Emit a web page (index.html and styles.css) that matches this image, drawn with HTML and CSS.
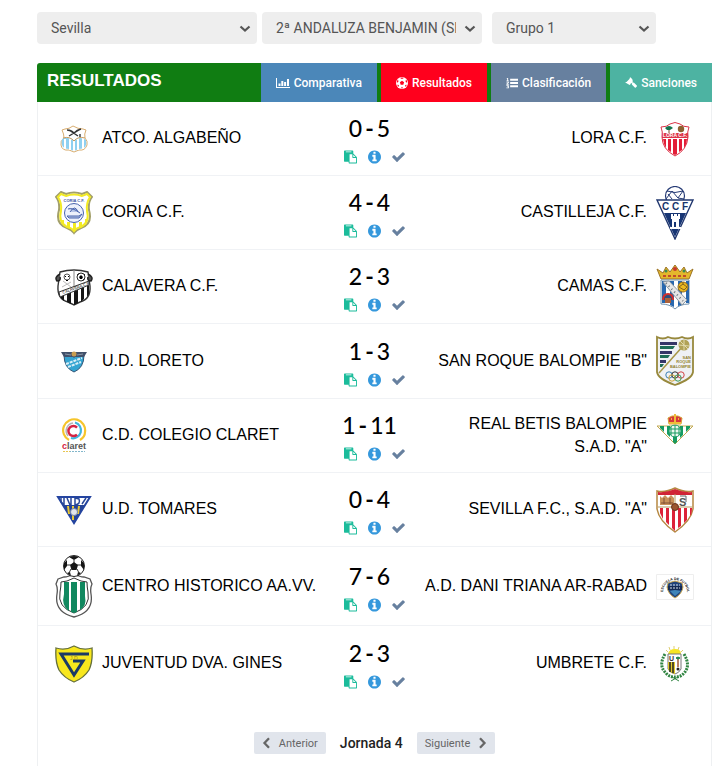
FILE: index.html
```html
<!DOCTYPE html>
<html lang="es">
<head>
<meta charset="utf-8">
<meta name="viewport" content="width=device-width, initial-scale=1">
<title>Resultados</title>
<link rel="stylesheet" href="styles.css">
</head>
<body>
<svg class="sprite" aria-hidden="true">
  <symbol id="i-paste" viewBox="0 0 1792 1792"><path d="M768 1664h896v-640h-416q-40 0-68-28t-28-68v-416h-384v1152zm256-1440v-64q0-13-9.500-22.500t-22.500-9.500h-704q-13 0-22.500 9.500t-9.500 22.500v64q0 13 9.500 22.500t22.500 9.500h704q13 0 22.500-9.500t9.500-22.500zm256 672h299l-299-299v299zm512 128v672q0 40-28 68t-68 28h-960q-40 0-68-28t-28-68v-160h-544q-40 0-68-28t-28-68v-1344q0-40 28-68t68-28h1088q40 0 68 28t28 68v328q21 13 36 28l408 408q28 28 48 76t20 88z"/></symbol>
  <symbol id="i-info" viewBox="128 128 1536 1536"><path d="M1152 1376v-160q0-14-9-23t-23-9h-96v-512q0-14-9-23t-23-9h-320q-14 0-23 9t-9 23v160q0 14 9 23t23 9h96v320h-96q-14 0-23 9t-9 23v160q0 14 9 23t23 9h448q14 0 23-9t9-23zm-128-896v-160q0-14-9-23t-23-9h-192q-14 0-23 9t-9 23v160q0 14 9 23t23 9h192q14 0 23-9t9-23zm640 416q0 209-103 385.500t-279.500 279.500-385.500 103-385.500-103-279.500-279.500-103-385.500 103-385.500 279.500-279.500 385.500-103 385.500 103 279.500 279.500 103 385.500z"/></symbol>
  <symbol id="i-check" viewBox="100 128 1592 1592"><path d="M1671 566q0 40-28 68l-724 724-136 136q-28 28-68 28t-68-28l-136-136-362-362q-28-28-28-68t28-68l136-136q28-28 68-28t68 28l294 295 656-657q28-28 68-28t68 28l136 136q28 28 28 68z"/></symbol>
  <symbol id="i-down" viewBox="0 0 12 8"><path d="M1.500 1.500 6 5.600l4.500-4.100" fill="none" stroke="currentColor" stroke-width="2.200"/></symbol>
  <symbol id="i-left" viewBox="0 0 8 12"><path d="M6.500 1.300 2 6l4.500 4.700" fill="none" stroke="currentColor" stroke-width="2.300"/></symbol>
  <symbol id="i-right" viewBox="0 0 8 12"><path d="M1.500 1.300 6 6l-4.500 4.700" fill="none" stroke="currentColor" stroke-width="2.300"/></symbol>
  <symbol id="i-bars" viewBox="0 0 14 12"><path d="M0 1h1v9h13v1H0zM2.500 6.500h2V9h-2zM5.300 4h2v5h-2zM8.100 5h2v4h-2zM11 2h2v7h-2z"/></symbol>
  <symbol id="i-ball" viewBox="0 0 12 12"><circle cx="6" cy="6" r="6"/><path d="m6 3.800 2.100 1.500-.8 2.500H4.700l-.8-2.500zM4.100.9 6 2l1.900-1.100L6 .5zM.9 5.900l1.600-1.300L2 2.600 1 4zM11.100 5.900 9.500 4.600l.5-2L11 4zM2.600 10l.3-2.100-1.700-.2.600 1.400zM9.400 10l-.3-2.100 1.700-.2-.6 1.400zM4.900 11.300 6 9.700l1.100 1.600z" fill="#ff001d"/></symbol>
  <symbol id="i-list" viewBox="0 0 13 12"><path d="M4.500 1.500H13v2H4.500zM4.500 5H13v2H4.500zM4.500 8.500H13v2H4.500zM1.200.5h1.100v2.800h.8V4H.5v-.7h.8V1.500H.5zM.5 4.600h2.600v1.500L1.700 7h1.400v.8H.4V6.700l1.600-1V5.400H.5zM.4 8.500h2.700v3.200H.4V11h1.700v-.6H1v-.7h1.100v-.5H.4z"/></symbol>
  <symbol id="i-gavel" viewBox="0 0 12 12"><path d="M5.400.3 7.600 2.500l-.5.500 1 1-.9 1 1 .8.600-.4 3 3q.5.500 0 1l-1 1q-.5.500-1 0l-3-3 .4-.6-.9-.9-1 1-.1.800-.5.400L.3 5.400l.5-.5.700.1 3.200-3.200-.1-.8z"/></symbol>
</svg>

<main class="page">
  <form class="filters">
    <div class="filter filter-wide">
      <select aria-label="Provincia"><option>Sevilla</option></select>
      <svg class="caret"><use href="#i-down"/></svg>
    </div>
    <div class="filter filter-wide">
      <select aria-label="Competición"><option>2ª ANDALUZA BENJAMIN (SEVILLA)</option></select>
      <svg class="caret"><use href="#i-down"/></svg>
    </div>
    <div class="filter filter-group">
      <select aria-label="Grupo"><option>Grupo 1</option></select>
      <svg class="caret"><use href="#i-down"/></svg>
    </div>
  </form>

  <section class="panel">
    <header class="panel-head">
      <h1>RESULTADOS</h1>
      <nav class="tabs">
        <a class="tab tab-blue" href="#"><svg class="tab-icon tab-icon-wide"><use href="#i-bars"/></svg>Comparativa</a>
        <a class="tab tab-red" href="#"><svg class="tab-icon"><use href="#i-ball"/></svg>Resultados</a>
        <a class="tab tab-slate" href="#"><svg class="tab-icon"><use href="#i-list"/></svg>Clasificación</a>
        <a class="tab tab-teal" href="#"><svg class="tab-icon"><use href="#i-gavel"/></svg>Sanciones</a>
      </nav>
    </header>

    <ul class="matches">
      <li class="match">
        <div class="team">
          <svg class="crest" viewBox="0 0 38 28" height="28">
            <path d="M10 4q4 0 8-3 5 3 10 3l3 1q-2 4-1 8 3 3 2 7-2 6-8 5l-5 2-5-2q-7 1-8-5-1-4 3-7 0-4-2-8z" fill="#fff" stroke="#d9ae71"/>
            <path d="M7 14q3-2 6-1 3 1 6 3 3-2 6-3 4 0 6 2 2 9-7 9l-5 2-5-2q-9 0-7-10z" fill="#8fd0f0"/>
            <path d="M10 14v10M15 14v11M19 16v10M23 14v11M28 13v11" stroke="#fff" stroke-width="2"/>
            <path d="M12 5q4 0 7 3 3-3 7-4M14 11l10-6M23 11l-9-6M25 9v3" fill="none" stroke="#333" stroke-width="1.400"/>
            <path d="M8 13q7-2 11 3 4-5 11-3" stroke="#c79a5c" fill="none"/>
          </svg>
          <span class="name">ATCO. ALGABEÑO</span>
        </div>
        <div class="center"><strong class="score"><span>0</span><b>-</b><span>5</span></strong><div class="actions"><a class="paste" href="#" aria-label="Acta"><svg><use href="#i-paste"/></svg></a><a class="info" href="#" aria-label="Información"><svg><use href="#i-info"/></svg></a><a class="check" href="#" aria-label="Confirmado"><svg><use href="#i-check"/></svg></a></div></div>
        <div class="team team-away">
          <svg class="crest" viewBox="0 0 38 36" height="36">
            <path d="M5 6q6 0 9-3 5-3 10 0 3 3 9 3-2 5-1 10-1 13-13 19Q6 28 6 16 7 11 5 6z" fill="#fff" stroke="#dc3448"/>
            <path d="M7 18h3v9l-2-4zM12 18h3v13l-3-2zM17 18h4v15l-2 1-2-1zM23 18h3v11l-3 2zM28 18h3q0 5-3 9z" fill="#e31e38"/>
            <path d="M6 12h26v5H6z" fill="#dc3448"/>
            <path d="M13 7v5" stroke="#754b26"/><path d="M9 7q4-4 8 0l-3 2h-3z" fill="#16724e"/><circle cx="25" cy="8" r="3.200" fill="#8c6130"/>
            <text x="19" y="16" font-size="5" font-weight="bold" fill="#fff" text-anchor="middle">LORA C.F.</text>
          </svg>
          <span class="name">LORA C.F.</span>
        </div>
      </li>

      <li class="match">
        <div class="team">
          <svg class="crest" viewBox="0 0 38 44" height="44">
            <path d="m6 1 5 2q8-3 16 0l5-2 5 5q-4 5-3 13 4 14-8 18-5 2-7 5-2-3-7-5Q0 33 4 19 5 11 1 6z" fill="#fff" stroke="#a3a06a" stroke-width="2"/>
            <path d="m6 3 5 2q8-3 16 0l5-2 3 3q-4 6-3 14 3 11-6 16-5 1-7 4-2-3-7-4Q3 31 6 20 7 12 3 6z" fill="none" stroke="#f2ea24" stroke-width="2"/>
            <path d="M6 29h3v6l-3-3zM12 31h3v7l-3-2zM18 32h3v7l-2 2-1-2zM24 31h3v5l-3 1zM30 28h3l-2 6h-1z" fill="#f2ea24"/>
            <circle cx="19" cy="22" r="9.500" fill="#edf1fb" stroke="#4964ad"/>
            <path d="M12 25h12l3-2-3 4H14zM15 21q5-8 8 0M13 18q4-2 12 4" fill="#b7c5e7" stroke="#4964ad"/>
            <text x="19" y="11" font-size="4" fill="#4055a3" font-weight="bold" text-anchor="middle">CORIA C.F.</text>
          </svg>
          <span class="name">CORIA C.F.</span>
        </div>
        <div class="center"><strong class="score"><span>4</span><b>-</b><span>4</span></strong><div class="actions"><a class="paste" href="#" aria-label="Acta"><svg><use href="#i-paste"/></svg></a><a class="info" href="#" aria-label="Información"><svg><use href="#i-info"/></svg></a><a class="check" href="#" aria-label="Confirmado"><svg><use href="#i-check"/></svg></a></div></div>
        <div class="team team-away">
          <svg class="crest" viewBox="0 0 38 54" height="54">
            <circle cx="19" cy="10" r="9.500" fill="#fff" stroke="#263b75" stroke-width="1.200"/>
            <path d="M11 5q8 3 16 0M10 13l6-8 6 7 5-7M16 13l-4-5M22 12l6 1" fill="none" stroke="#263b75"/>
            <path d="M1 14h36L19 53z" fill="#fff" stroke="#21376f" stroke-width="1.400"/>
            <path d="M8 27h22L19 51z" fill="#173574"/>
            <path d="M15 28h2v2h1v-2h3v2h1v-2h2v5h-1v8h2v2H14v-2h2v-8h-1z" fill="#fff"/><path d="M18 36h2v5h-2z" fill="#173574"/>
            <text x="6" y="24" font-size="10" font-weight="bold" fill="#18346d">C</text><text x="16" y="24" font-size="10" font-weight="bold" fill="#18346d">C</text><text x="26" y="24" font-size="10" font-weight="bold" fill="#18346d">F</text>
          </svg>
          <span class="name">CASTILLEJA C.F.</span>
        </div>
      </li>

      <li class="match">
        <div class="team">
          <svg class="crest" viewBox="0 0 38 37" height="37">
            <path d="M5 3Q12 1 19 1t14 2l2 14q1 13-10 16l-6 3-6-3Q2 30 3 17z" fill="#fff" stroke="#333" stroke-width="1.400"/>
            <path d="M6 26h3v6l-3-3zM12 24h4v11l-4-2zM19 21h4v13l-4 2zM26 18h3v12l-3 3zM32 16h2v9l-2 3z" fill="#151515"/>
            <path d="M4 23 34 12v4L5 28z" fill="#fff" stroke="#333"/>
            <path d="M19 1v16" stroke="#888"/><path d="m7 18 9-5M8 12l8 6" stroke="#bbb"/>
            <circle cx="12" cy="8" r="3" fill="#fff" stroke="#555"/><path d="M10 7h1v1h-1zM13 7h1v1h-1zM11 11h2v1h-2z"/>
            <circle cx="26" cy="8" r="4" fill="#fff" stroke="#222"/><path d="m26 6 2 2-1 2h-2l-1-2z"/><path d="m22 6 2-1M29 5l1 1M24 12l1-1M29 11l-1-1" stroke="#222"/>
            <path d="M5 5Q-1 8 2 12q4 0 3-4M33 5q6 3 3 7-4 0-3-4" fill="#555" stroke="#222" stroke-width="1.500"/>
            <text x="8" y="25" font-size="4" transform="rotate(-20 8 25)">CALAVERA C.F</text>
          </svg>
          <span class="name">CALAVERA C.F.</span>
        </div>
        <div class="center"><strong class="score"><span>2</span><b>-</b><span>3</span></strong><div class="actions"><a class="paste" href="#" aria-label="Acta"><svg><use href="#i-paste"/></svg></a><a class="info" href="#" aria-label="Información"><svg><use href="#i-info"/></svg></a><a class="check" href="#" aria-label="Confirmado"><svg><use href="#i-check"/></svg></a></div></div>
        <div class="team team-away">
          <svg class="crest" viewBox="0 0 38 46" height="46">
            <path d="M5 15 1 5l6 4 3-6 4 5 5-7 5 7 4-5 3 6 6-4-4 10z" fill="#e4b72b" stroke="#9c7427"/>
            <circle cx="19" cy="5" r="2" fill="#c8372d"/><circle cx="10" cy="7" r="1.500" fill="#3b8a50"/><circle cx="28" cy="7" r="1.500" fill="#3b8a50"/><path d="M7 12h24" stroke="#c14b2c" stroke-width="2" stroke-dasharray="3 2"/>
            <path d="M5 16h28v24q-9 0-14 5-5-5-14-5z" fill="#fff" stroke="#7392ae"/>
            <path d="M6 17h4v22H6zM14 17h4v26l-4-2zM22 17h4v24l-4 1zM30 17h3v22h-3z" fill="#2867ae"/>
            <path d="m7 18 6-1 18 19-5 5z" fill="#e6e6e6" stroke="#8d99a3"/><path d="m10 19 17 18" stroke="#68737c" stroke-dasharray="1 3" stroke-width="2"/>
            <circle cx="27" cy="23" r="5" fill="#edbb1f" stroke="#946d1d"/><path d="m23 23 4-3 4 3-3 3zM27 18v2" fill="none" stroke="#80611f"/>
            <path d="M7 36q0-6 5-6t5 6" fill="#2c4d7d" stroke="#d32e2a" stroke-width="2"/><path d="M9 34h6v5H9z" fill="#ad6138"/>
          </svg>
          <span class="name">CAMAS C.F.</span>
        </div>
      </li>

      <li class="match">
        <div class="team">
          <svg class="crest" viewBox="0 0 38 22" height="22">
            <path d="M9 4h20q0 13-10 17Q9 17 9 4z" fill="#35a5d2" stroke="#315475"/>
            <path d="M6 1h26l-3 5H20l-1 1-1-1H9z" fill="#41506a"/><path d="m10 3 6 1M22 4l6-1" stroke="#8b98a8"/><circle cx="19" cy="3" r="2.500" fill="#c99d50"/>
            <path d="m11 13 16-6M13 16l13-5" stroke="#d9eff7" stroke-width="2" stroke-dasharray="3 1"/>
          </svg>
          <span class="name">U.D. LORETO</span>
        </div>
        <div class="center"><strong class="score"><span>1</span><b>-</b><span>3</span></strong><div class="actions"><a class="paste" href="#" aria-label="Acta"><svg><use href="#i-paste"/></svg></a><a class="info" href="#" aria-label="Información"><svg><use href="#i-info"/></svg></a><a class="check" href="#" aria-label="Confirmado"><svg><use href="#i-check"/></svg></a></div></div>
        <div class="team team-away">
          <svg class="crest" viewBox="0 -4 38 59" height="59">
            <path d="M1 1q6 3 11 0 7 3 14 0 6 3 11 0v35q-1 7-18 13Q2 43 1 36z" fill="#eff1f5" stroke="#98893d" stroke-width="1.800"/>
            <path d="M4 6h17v3H4zM4 15h12v3H4zM4 24h6v3H4z" fill="#353568"/><path d="M4 10h15l-2 3H4zM4 19h10l-2 3H4zM4 28h4l-2 3H4z" fill="#1e6d57"/>
            <path d="M3 37 27 10" stroke="#a69545" stroke-width="1.500"/><circle cx="28" cy="9" r="5.500" fill="#b1a256"/><path d="m23 9 10 1M28 4v10M24 5l8 8" stroke="#e1daad"/>
            <g font-size="4" font-weight="bold" fill="#938331" text-anchor="end"><text x="35" y="23">SAN</text><text x="35" y="27">ROQUE</text><text x="35" y="32">BALOMPIE</text></g>
            <g fill="none"><circle cx="13" cy="39" r="3.200" stroke="#3b80b5"/><circle cx="19" cy="39" r="3.200" stroke="#333"/><circle cx="25" cy="39" r="3.200" stroke="#d24547"/><circle cx="16" cy="42" r="3.200" stroke="#d2a233"/><circle cx="22" cy="42" r="3.200" stroke="#399656"/></g>
          </svg>
          <span class="name">SAN ROQUE BALOMPIE "B"</span>
        </div>
      </li>

      <li class="match">
        <div class="team">
          <svg class="crest" viewBox="0 0 38 36" height="36">
            <g fill="none"><path d="M14 22A11 11 0 1 1 30 14Q30 19 25 22" stroke="#f6c52b" stroke-width="2.200"/><path d="M20 4.500a8 8 0 0 1-4 15.500" stroke="#41b7de" stroke-width="2.200"/><path d="M13 18a8 8 0 0 1 5-13" stroke="#b6b6b6" stroke-width="1.500"/><path d="M22 9.500a5 5 0 1 0 0 7" stroke="#d52443" stroke-width="2.500"/></g>
            <text x="7" y="31" font-size="9" font-weight="bold" fill="#555"><tspan fill="#d52443">c</tspan>laret</text>
            <path d="M8 33.500h22" stroke="#83b7cb" stroke-dasharray="2 1"/><path d="M8 33.500h7" stroke="#e8c650" stroke-dasharray="2 1"/>
          </svg>
          <span class="name">C.D. COLEGIO CLARET</span>
        </div>
        <div class="center"><strong class="score"><span>1</span><b>-</b><span>11</span></strong><div class="actions"><a class="paste" href="#" aria-label="Acta"><svg><use href="#i-paste"/></svg></a><a class="info" href="#" aria-label="Información"><svg><use href="#i-info"/></svg></a><a class="check" href="#" aria-label="Confirmado"><svg><use href="#i-check"/></svg></a></div></div>
        <div class="team team-away">
          <svg class="crest" viewBox="0 0 38 46" height="46">
            <path d="M1 13h36L19 31z" fill="#fff" stroke="#c2a950"/>
            <path d="M4 13h4v6l-4-4zM11 13h3v11l-3-3zM17 13h4v16l-2 2-2-2zM24 13h3v9l-3 3zM30 13h4v2l-4 4z" fill="#169b61"/>
            <circle cx="19" cy="18" r="6" fill="#eef7ef" stroke="#169b61"/><path d="M15 14v8M19 12v12M23 14v8M14 16h10M14 20h10" stroke="#169b61"/>
            <path d="m13 11-1-6 4-2h6l4 2-1 6z" fill="#d6363b" stroke="#d5a336"/><path d="M13 10h12M19 1v8" stroke="#efbd38" stroke-width="2"/><path d="M15 6h1M22 6h1" stroke="#efbd38" stroke-width="2"/>
          </svg>
          <span class="name">REAL BETIS BALOMPIE S.A.D. "A"</span>
        </div>
      </li>

      <li class="match">
        <div class="team">
          <svg class="crest" viewBox="0 0 38 30" height="30">
            <path d="M3 2h32L19 28z" fill="#fff" stroke="#2444a0" stroke-width="2"/>
            <path d="M8 10h22L19 27z" fill="#244397"/><path d="m13 11 1 8M18 11v14M24 11l-1 8" stroke="#e7c735" stroke-width="2"/>
            <path d="M6 3v4l3 3V3M12 3l3 7M16 3v7M20 3v7q6-1 4-6l-4-1M27 9l4-6" fill="none" stroke="#274799" stroke-width="1.500"/>
            <circle cx="19" cy="17" r="3.500" fill="#e2e5eb" stroke="#7183aa"/>
          </svg>
          <span class="name">U.D. TOMARES</span>
        </div>
        <div class="center"><strong class="score"><span>0</span><b>-</b><span>4</span></strong><div class="actions"><a class="paste" href="#" aria-label="Acta"><svg><use href="#i-paste"/></svg></a><a class="info" href="#" aria-label="Información"><svg><use href="#i-info"/></svg></a><a class="check" href="#" aria-label="Confirmado"><svg><use href="#i-check"/></svg></a></div></div>
        <div class="team team-away">
          <svg class="crest" viewBox="0 0 38 46" height="46">
            <path d="M1 4q8 2 18-3 10 5 18 3v18Q35 34 19 45 3 34 1 22z" fill="#fff" stroke="#b68842" stroke-width="1.500"/>
            <path d="M2 5q8 1 17-3 9 4 17 3v3H2z" fill="#d12436"/>
            <path d="M4 21h3v11l-3-6zM10 21h3v17l-3-3zM16 21h3v23l-3-3zM22 21h3v18l-3 2zM28 21h3v12l-3 3zM34 21h2q0 6-2 8z" fill="#dc2238"/>
            <path d="M19 7v14M2 20h34" stroke="#b59d65"/>
            <path d="M4 18V9l2 2 3-3 3 3 3-3 3 3v7z" fill="#c9925a"/><path d="M5 16h12M8 11v6M14 11v6" stroke="#804f34"/>
            <text x="23" y="19" font-size="11" font-weight="bold" fill="#555">S</text><path d="M24 9h6v6" fill="none" stroke="#666"/>
            <circle cx="19" cy="20" r="3.500" fill="#9b562f" stroke="#69341f"/>
          </svg>
          <span class="name">SEVILLA F.C., S.A.D. "A"</span>
        </div>
      </li>

      <li class="match">
        <div class="team">
          <svg class="crest" viewBox="0 0 38 63" height="63">
            <path d="m3 24 6-2q4 0 10-3 6 3 10 3l6 2 2 5q-2 4-1 10 3 18-17 23Q-1 57 2 39q1-6-1-10z" fill="#fff" stroke="#555" stroke-width="1.300"/>
            <path d="m6 27 6-1 7-3 7 3 6 1q0 5 1 10 3 15-14 21Q2 52 5 37q1-5 1-10z" fill="#fff" stroke="#333"/>
            <path d="M9 27h5v29q-8-5-5-17zM16 27h6v30l-3 1-3-1zM25 27h5v14q2 10-5 14z" fill="#11885f"/>
            <circle cx="19" cy="11" r="10.500" fill="#fff" stroke="#222"/>
            <path d="m19 7 4 3-1.500 5h-5L15 10zM14 2q5-2 10 0l-5 3zM9 8l3-3v6l-3 4zM29 8l-3-3v6l3 4zM12 18l3-1 1 4zM26 18l-3-1-1 4z" fill="#151515"/><path d="M19 5v3M12 10h4M22 10h4M16 14l-2 4M22 14l2 4" stroke="#333"/>
          </svg>
          <span class="name">CENTRO HISTORICO AA.VV.</span>
        </div>
        <div class="center"><strong class="score"><span>7</span><b>-</b><span>6</span></strong><div class="actions"><a class="paste" href="#" aria-label="Acta"><svg><use href="#i-paste"/></svg></a><a class="info" href="#" aria-label="Información"><svg><use href="#i-info"/></svg></a><a class="check" href="#" aria-label="Confirmado"><svg><use href="#i-check"/></svg></a></div></div>
        <div class="team team-away">
          <svg class="crest" viewBox="0 0 38 26" height="26">
            <path d="M.5 25.500V.5h37v25z" fill="#fff" stroke="#eee"/>
            <path id="arc" d="M7 18A12 12 0 0 1 31 18" fill="none"/><text font-size="3.500" font-weight="bold" fill="#222"><textPath href="#arc">ESCUELA DE FUTBOL</textPath></text>
            <path d="m12 9 7-2 7 2 1 4q-1 7-8 11-7-4-8-11z" fill="#21437a" stroke="#c9a653"/><path d="M12 12h14v4H12z" fill="#152b55"/><path d="M14 11h10M14 14h10" stroke="#d8e3ed" stroke-dasharray="2 1"/><path d="m14 17 5-1 6 1-6 5z" fill="#3f85b9"/>
          </svg>
          <span class="name">A.D. DANI TRIANA AR-RABAD</span>
        </div>
      </li>

      <li class="match">
        <div class="team">
          <svg class="crest" viewBox="0 0 38 38" height="38">
            <path d="M1 3q9 3 18-2 9 5 18 2 1 14-3 22-5 8-15 12Q9 33 4 25 0 17 1 3z" fill="#f8e71d" stroke="#65703b" stroke-width="1.300"/>
            <path d="M34 9H6l13 21 9-14H18" fill="none" stroke="#1c3a65" stroke-width="3"/>
            <text x="15" y="15" font-size="5" fill="#927f26">J.D</text>
          </svg>
          <span class="name">JUVENTUD DVA. GINES</span>
        </div>
        <div class="center"><strong class="score"><span>2</span><b>-</b><span>3</span></strong><div class="actions"><a class="paste" href="#" aria-label="Acta"><svg><use href="#i-paste"/></svg></a><a class="info" href="#" aria-label="Información"><svg><use href="#i-info"/></svg></a><a class="check" href="#" aria-label="Confirmado"><svg><use href="#i-check"/></svg></a></div></div>
        <div class="team team-away">
          <svg class="crest" viewBox="0 0 38 36" height="36">
            <path d="M12 8q1-5 7-5t6 5z" fill="#f6e523"/><path d="m10 4 2 2M13 1l1 3M18 0v3M23 1l-1 3M27 4l-2 2" stroke="#dfce70"/>
            <path d="M12 8h13v15q-2 4-6 5-5-1-7-5z" fill="#fff" stroke="#777"/>
            <path d="M12 16h7v12q-5-1-7-5z" fill="#e1c92b"/><path d="M14 16v10M17 16v11" stroke="#222" stroke-width="1.500"/>
            <text x="13" y="15" font-size="7" font-weight="bold" fill="#333">U</text>
            <path d="M22 13v8" stroke="#a25a33" stroke-width="1.500"/><path d="m20 12 2-1 2 1-2 1z" fill="#188347" stroke="#188347"/><circle cx="22" cy="23" r="1.500" fill="#222"/>
            <path d="M9 8q-7 12 1 19 3 4 9 4M28 8q7 12 0 19-3 4-9 4" fill="none" stroke="#318542" stroke-width="3" stroke-dasharray="2 1"/><path d="m16 31 7 4M22 31l-7 4" stroke="#318542"/>
          </svg>
          <span class="name">UMBRETE C.F.</span>
        </div>
      </li>
    </ul>

    <nav class="pager" aria-label="Jornadas">
      <button type="button"><svg><use href="#i-left"/></svg>Anterior</button>
      <strong>Jornada 4</strong>
      <button type="button">Siguiente<svg><use href="#i-right"/></svg></button>
    </nav>
  </section>
</main>
</body>
</html>
```
FILE: styles.css
```css
* { box-sizing: border-box; }

body {
  margin: 0;
  background: #fff;
  color: #000;
  font-family: "Liberation Sans", Arial, sans-serif;
  font-size: 16px;
}

a { color: inherit; text-decoration: none; }
svg { display: block; flex: none; fill: currentColor; }
.sprite { display: none; }

.page {
  display: flex;
  flex-direction: column;
  min-height: 100vh;
  padding: 12px 16px 0 37px;
}

.filters { display: flex; gap: 5px; margin-bottom: 19px; }
.filter { position: relative; color: #555; }
.filter-wide { flex: 0 1 220px; }
.filter-group { flex: 0 1 164px; margin-left: 5px; }
.filter select {
  display: block;
  width: 100%;
  height: 32px;
  padding: 0 26px 0 14px;
  border: 0;
  border-radius: 4px;
  appearance: none;
  background: #eee;
  color: #555;
  font: 14px Roboto, sans-serif;
}
.caret {
  position: absolute;
  top: 13px;
  right: 6px;
  width: 12px;
  height: 8px;
  pointer-events: none;
}

.panel {
  flex: 1;
  border: solid #eef0f2;
  border-width: 0 1px;
  border-radius: 4px 4px 0 0;
}
.panel-head {
  display: flex;
  justify-content: space-between;
  margin: 0 -1px;
  background: #107d12;
  border-radius: 3px 0 0 0;
  color: #fff;
}
.panel-head h1 {
  margin: 0;
  padding-left: 10px;
  font-size: 17px;
  line-height: 35px;
}
.tabs { display: flex; gap: 4px; }
.tab {
  display: flex;
  align-items: center;
  gap: 4px;
  height: 39px;
  padding: 0 15px;
  font: 500 12px Roboto, sans-serif;
}
.tab-icon { width: 12px; height: 12px; }
.tab-icon-wide { width: 14px; }
.tab-blue { background: #4b87b9; }
.tab-red { background: #ff001d; }
.tab-slate { background: #67809f; }
.tab-teal { background: #4db3a2; }

.matches { margin: 0; padding: 0; list-style: none; }
.match {
  display: grid;
  grid-template-columns: 1fr 13% 1fr;
  align-items: center;
  min-height: 74px;
  padding: 8px 17px 7px;
  border-bottom: 1px solid #f0f2f5;
}
.match:last-child { border-bottom: 0; }
.team { display: flex; align-items: center; gap: 9px; }
.team-away { flex-direction: row-reverse; padding-left: 6px; text-align: right; }
.crest { width: 38px; }
.name { padding-bottom: 3px; line-height: 23px; }
.score {
  display: flex;
  justify-content: center;
  gap: 3px;
  padding-right: 10px;
  font: 500 23px/28px Lato, sans-serif;
}
.score b { font-weight: 700; }
.actions { display: flex; justify-content: center; gap: 11px; padding-top: 8px; }
.actions svg { width: 13px; height: 14px; }
.paste { color: #1bbc9b; }
.info { color: #3598dc; }
.check { color: #67809f; }

.pager {
  display: flex;
  justify-content: center;
  align-items: center;
  gap: 14px;
  padding: 32px 0 12px;
  font-family: Roboto, sans-serif;
  font-size: 14px;
}
.pager strong { font-weight: 500; color: #222; }
.pager button {
  display: flex;
  align-items: center;
  gap: 8px;
  height: 22px;
  padding: 0 8px;
  border: 0;
  border-radius: 2px;
  background: #e1e5ec;
  color: #666;
  font: 11px Roboto, sans-serif;
}
.pager svg { width: 9px; height: 12px; }
```
